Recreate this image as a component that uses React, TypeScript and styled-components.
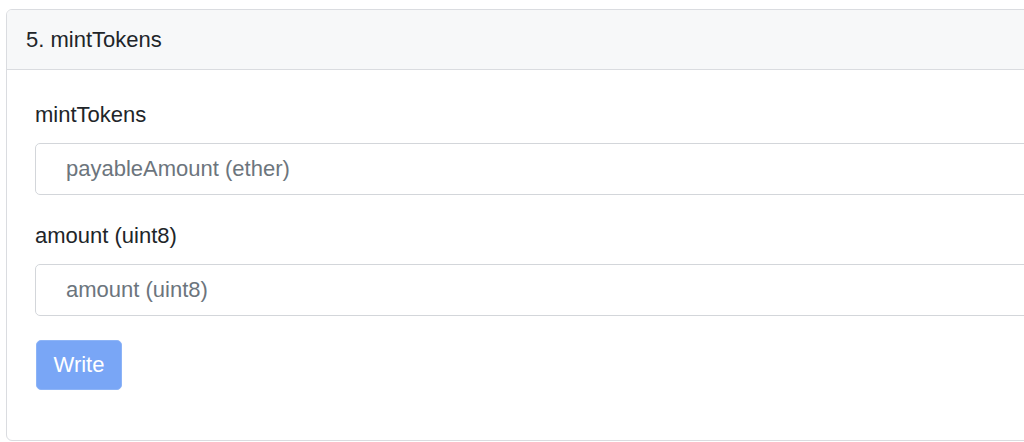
import styled, { createGlobalStyle } from "styled-components";

const GlobalStyle = createGlobalStyle`
  html, body {
    margin: 0;
    padding: 0;
    background: #ffffff;
    overflow: hidden;
  }
  body {
    font-family: "Liberation Sans", Arial, Helvetica, sans-serif;
    color: #212529;
  }
`

const Page = styled.div`
  padding: 9px 0 0 6px;
  width: 1024px;
  height: 442px;
  box-sizing: border-box;
  overflow: hidden;
`

const Card = styled.section`
  width: 1080px;
  height: 432px;
  box-sizing: border-box;
  border: 1px solid #dadce0;
  border-radius: 6px;
  background: #ffffff;
  overflow: hidden;
`

const CardHeader = styled.header`
  height: 60px;
  box-sizing: border-box;
  display: flex;
  align-items: center;
  padding: 0 19px;
  background: #f7f8f9;
  border-bottom: 1px solid #dadce0;
  font-size: 22px;
  line-height: 33px;
`

const CardBody = styled.div`
  display: flex;
  flex-direction: column;
  padding: 28px 28px 50px 28px;
`

const Field = styled.div`
  display: flex;
  flex-direction: column;
  gap: 12px;
  margin-bottom: 24px;
`

const Label = styled.label`
  font-size: 22px;
  line-height: 33px;
  color: #212529;
`

const Input = styled.input`
  height: 52px;
  box-sizing: border-box;
  border: 1px solid #d3d6da;
  border-radius: 5px;
  padding: 0 30px;
  font-family: "Liberation Sans", Arial, Helvetica, sans-serif;
  font-size: 22px;
  color: #212529;
  background: #ffffff;
  outline: none;
  &::placeholder {
    color: #6c757d;
  }
`

const WriteButton = styled.button`
  align-self: flex-start;
  width: 86px;
  height: 50px;
  margin-left: 1px;
  border: 1px solid #8db4f7;
  border-radius: 5px;
  background: #79a6f6;
  color: #ffffff;
  font-family: "Liberation Sans", Arial, Helvetica, sans-serif;
  font-size: 22px;
  padding: 0;
  cursor: default;
`

const fields = [
  { label: "mintTokens", placeholder: "payableAmount (ether)" },
  { label: "amount (uint8)", placeholder: "amount (uint8)" },
]

export default function App() {
  return (
    <Page>
      <GlobalStyle />
      <Card>
        <CardHeader>5. mintTokens</CardHeader>
        <CardBody>
          {fields.map((f) => (
            <Field key={f.label}>
              <Label>{f.label}</Label>
              <Input placeholder={f.placeholder} />
            </Field>
          ))}
          <WriteButton disabled>Write</WriteButton>
        </CardBody>
      </Card>
    </Page>
  )
}
